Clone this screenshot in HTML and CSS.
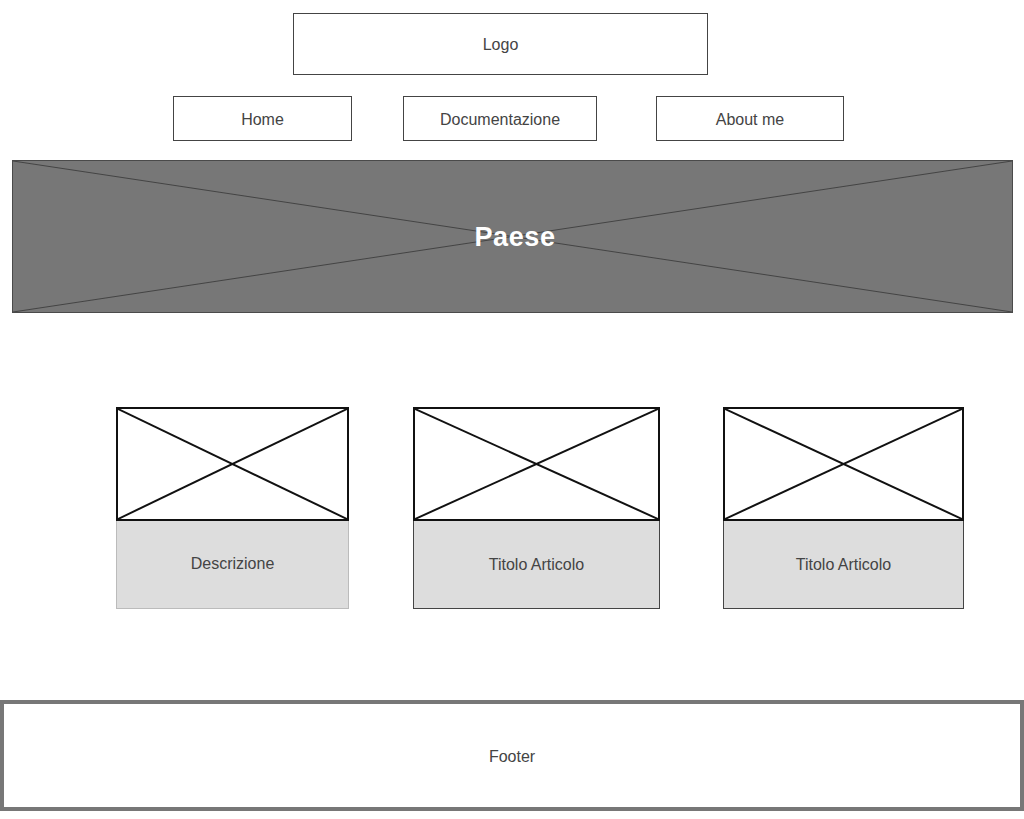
FILE: index.html
```html
<!DOCTYPE html>
<html lang="it">
<head>
    <meta charset="UTF-8">
    <meta name="viewport" content="width=device-width, initial-scale=1.0">
    <title>Wireframe</title>
    <link rel="stylesheet" href="styles.css">
</head>
<body>

<header class="top">
    <div class="logo">Logo</div>
</header>

<nav class="nav">
    <a class="nav-item nav-home" href="#">Home</a>
    <a class="nav-item nav-doc" href="#">Documentazione</a>
    <a class="nav-item nav-about" href="#">About me</a>
</nav>

<section class="hero">
    <svg class="cross" viewBox="0 0 100 100" preserveAspectRatio="none">
        <line x1="0" y1="0" x2="100" y2="100" vector-effect="non-scaling-stroke"/>
        <line x1="0" y1="100" x2="100" y2="0" vector-effect="non-scaling-stroke"/>
    </svg>
    <h1 class="hero-title">Paese</h1>
</section>

<main class="cards">
    <div class="card card-1">
        <div class="card-img">
            <svg class="cross" viewBox="0 0 100 100" preserveAspectRatio="none">
                <line x1="0" y1="0" x2="100" y2="100" vector-effect="non-scaling-stroke"/>
                <line x1="0" y1="100" x2="100" y2="0" vector-effect="non-scaling-stroke"/>
            </svg>
        </div>
        <div class="card-text light">Descrizione</div>
    </div>
    <div class="card card-2">
        <div class="card-img">
            <svg class="cross" viewBox="0 0 100 100" preserveAspectRatio="none">
                <line x1="0" y1="0" x2="100" y2="100" vector-effect="non-scaling-stroke"/>
                <line x1="0" y1="100" x2="100" y2="0" vector-effect="non-scaling-stroke"/>
            </svg>
        </div>
        <div class="card-text">Titolo Articolo</div>
    </div>
    <div class="card card-3">
        <div class="card-img">
            <svg class="cross" viewBox="0 0 100 100" preserveAspectRatio="none">
                <line x1="0" y1="0" x2="100" y2="100" vector-effect="non-scaling-stroke"/>
                <line x1="0" y1="100" x2="100" y2="0" vector-effect="non-scaling-stroke"/>
            </svg>
        </div>
        <div class="card-text">Titolo Articolo</div>
    </div>
</main>

<footer class="footer">Footer</footer>

</body>
</html>
```

FILE: styles.css
```css
body { margin: 0; font-family: "Liberation Sans", Arial, sans-serif; font-size: 16px; color: #444; background: #fff; }

.top { display: flex; padding: 13px 0 0 293px; }
.logo { width: 413px; height: 58px; padding-top: 2px; border: 1px solid #444; display: flex; align-items: center; justify-content: center; }

.nav { display: flex; padding: 21px 0 0 173px; }
.nav-item { height: 41px; padding-top: 2px; border: 1px solid #444; display: flex; align-items: center; justify-content: center; color: #444; text-decoration: none; }
.nav-home { width: 177px; }
.nav-doc { width: 192px; margin-left: 51px; }
.nav-about { width: 186px; margin-left: 59px; }

.hero { position: relative; margin: 19px 0 0 12px; width: 999px; height: 151px; border: 1px solid #4a4a4a; background: #777; display: flex; align-items: center; justify-content: center; }
.hero .cross { position: absolute; top: 0; left: 0; width: 100%; height: 100%; }
.hero .cross line { stroke: #444; stroke-width: 1; }
.hero-title { position: relative; margin: 2px 0 0 5px; color: #fff; font-size: 27px; font-weight: bold; letter-spacing: 0.6px; }

.cards { display: flex; padding: 94px 0 0 116px; }
.card { display: flex; flex-direction: column; }
.card-1 { width: 233px; }
.card-2 { width: 247px; margin-left: 64px; }
.card-3 { width: 241px; margin-left: 63px; }
.card-img { position: relative; height: 110px; border: 2px solid #111; background: #fff; }
.card-img .cross { position: absolute; top: 0; left: 0; width: 100%; height: 100%; }
.card-img .cross line { stroke: #111; stroke-width: 2; }
.card-text { height: 87px; border: 1px solid #444; border-top: none; background: #ddd; display: flex; align-items: center; justify-content: center; }
.card-text.light { border-color: #bbb; padding-bottom: 2px; height: 85px; }

.footer { margin-top: 91px; height: 101px; padding-top: 2px; border: 4px solid #777; display: flex; align-items: center; justify-content: center; }
```
